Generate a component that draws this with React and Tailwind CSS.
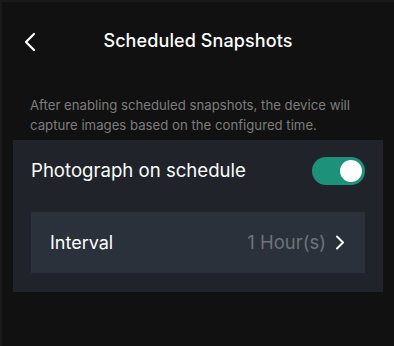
import { useState } from "react";

const font = { fontFamily: "Inter, 'Noto Sans', sans-serif" };

export default function App() {
  const [on, setOn] = useState(true);

  return (
    <div
      className="w-[394px] h-[346px] bg-[#111111] border-l-2 border-t-2 border-[#1a1a1a] text-white overflow-hidden"
      style={font}
    >
      {/* header */}
      <div className="relative h-[76px] flex items-center justify-center">
        <button className="absolute left-[17px] top-[26px] p-1">
          <svg width="14" height="20" viewBox="0 0 14 20" fill="none">
            <path d="M11 2 L3 10 L11 18" stroke="#fff" strokeWidth="2.2" strokeLinecap="round" strokeLinejoin="round" />
          </svg>
        </button>
        <h1 className="text-[18px] font-medium tracking-[0.1px]">Scheduled Snapshots</h1>
      </div>

      <p className="pl-[28px] pr-4 mt-[17px] text-[13.2px] leading-[20px] text-[#7c7c7c]">
        After enabling scheduled snapshots, the device will
        <br />
        capture images based on the configured time.
      </p>

      {/* card */}
      <div className="ml-[11px] mt-[5px] w-[370px] bg-[#20232a] px-[18px] pt-[17px] pb-[19px]">
        <div className="flex items-center justify-between h-[28px]">
          <span className="text-[18.6px]">Photograph on schedule</span>
          <button
            onClick={() => setOn(!on)}
            className={`w-[53px] h-[28px] rounded-full flex items-center px-[3px] ${on ? "bg-[#1e917b] justify-end" : "bg-[#3a3f48] justify-start"}`}
          >
            <span className="w-[22px] h-[22px] rounded-full bg-white" />
          </button>
        </div>

        <div className="mt-[27px] h-[61px] bg-[#2b313b] flex items-center justify-between pl-[19px] pr-[20px]">
          <span className="text-[18px]">Interval</span>
          <div className="flex items-center gap-[9px]">
            <span className="text-[18.5px] text-[#6f737a]">1 Hour(s)</span>
            <svg width="10" height="15" viewBox="0 0 10 15" fill="none">
              <path d="M2 1.5 L8 7.5 L2 13.5" stroke="#fff" strokeWidth="2" strokeLinecap="round" strokeLinejoin="round" />
            </svg>
          </div>
        </div>
      </div>
    </div>
  );
}
